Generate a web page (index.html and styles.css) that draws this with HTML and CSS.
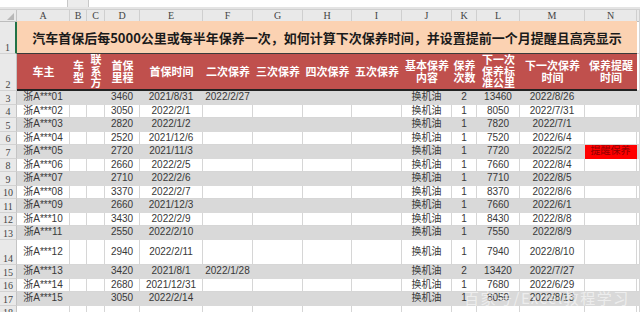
FILE: index.html
```html
<!DOCTYPE html>
<html lang="zh-CN">
<head>
<meta charset="utf-8">
<title>汽车保养提醒</title>
<link rel="stylesheet" href="styles.css">
</head>
<body>
<div class="sheet">
  <div class="topbar"><div class="namebox"></div><div class="fxgap"></div><div class="formula"></div></div>

  <div class="row colhdr">
    <div class="corner"><span class="tri"></span></div>
    <div class="ch">A</div><div class="ch">B</div><div class="ch">C</div><div class="ch">D</div><div class="ch">E</div><div class="ch">F</div><div class="ch">G</div><div class="ch">H</div><div class="ch">I</div><div class="ch">J</div><div class="ch">K</div><div class="ch">L</div><div class="ch">M</div><div class="ch">N</div><div class="ch"></div>
  </div>

  <div class="row r1">
    <div class="rh sel">1</div>
    <div class="title">汽车首保后每5000公里或每半年保养一次，如何计算下次保养时间，并设置提前一个月提醒且高亮显示</div>
    <div class="c"></div>
  </div>

  <div class="row r2">
    <div class="rh">2</div>
    <div class="h">车主</div>
    <div class="h">车<br>型</div>
    <div class="h">联<br>系<br>方</div>
    <div class="h">首保<br>里程</div>
    <div class="h">首保时间</div>
    <div class="h">二次保养</div>
    <div class="h">三次保养</div>
    <div class="h">四次保养</div>
    <div class="h">五次保养</div>
    <div class="h">基本保养<br>内容</div>
    <div class="h">保养<br>次数</div>
    <div class="h">下一次<br>保养标<br>准公里</div>
    <div class="h">下一次保养<br>时间</div>
    <div class="h">保养提醒<br>时间</div>
    <div class="c"></div>
  </div>

  <div class="row g"><div class="rh">3</div><div class="c">浙A***01</div><div class="c"></div><div class="c"></div><div class="c">3460</div><div class="c">2021/8/31</div><div class="c">2022/2/27</div><div class="c"></div><div class="c"></div><div class="c"></div><div class="c">换机油</div><div class="c">2</div><div class="c">13460</div><div class="c">2022/8/26</div><div class="c"></div><div class="c"></div></div>
  <div class="row w"><div class="rh">4</div><div class="c">浙A***02</div><div class="c"></div><div class="c"></div><div class="c">3050</div><div class="c">2022/2/1</div><div class="c"></div><div class="c"></div><div class="c"></div><div class="c"></div><div class="c">换机油</div><div class="c">1</div><div class="c">8050</div><div class="c">2022/7/31</div><div class="c"></div><div class="c"></div></div>
  <div class="row g"><div class="rh">5</div><div class="c">浙A***03</div><div class="c"></div><div class="c"></div><div class="c">2820</div><div class="c">2022/1/2</div><div class="c"></div><div class="c"></div><div class="c"></div><div class="c"></div><div class="c">换机油</div><div class="c">1</div><div class="c">7820</div><div class="c">2022/7/1</div><div class="c"></div><div class="c"></div></div>
  <div class="row w"><div class="rh">6</div><div class="c">浙A***04</div><div class="c"></div><div class="c"></div><div class="c">2520</div><div class="c">2021/12/6</div><div class="c"></div><div class="c"></div><div class="c"></div><div class="c"></div><div class="c">换机油</div><div class="c">1</div><div class="c">7520</div><div class="c">2022/6/4</div><div class="c"></div><div class="c"></div></div>
  <div class="row g"><div class="rh">7</div><div class="c">浙A***05</div><div class="c"></div><div class="c"></div><div class="c">2720</div><div class="c">2021/11/3</div><div class="c"></div><div class="c"></div><div class="c"></div><div class="c"></div><div class="c">换机油</div><div class="c">1</div><div class="c">7720</div><div class="c">2022/5/2</div><div class="c alert">提醒保养</div><div class="c"></div></div>
  <div class="row w"><div class="rh">8</div><div class="c">浙A***06</div><div class="c"></div><div class="c"></div><div class="c">2660</div><div class="c">2022/2/5</div><div class="c"></div><div class="c"></div><div class="c"></div><div class="c"></div><div class="c">换机油</div><div class="c">1</div><div class="c">7660</div><div class="c">2022/8/4</div><div class="c"></div><div class="c"></div></div>
  <div class="row g"><div class="rh">9</div><div class="c">浙A***07</div><div class="c"></div><div class="c"></div><div class="c">2710</div><div class="c">2022/2/6</div><div class="c"></div><div class="c"></div><div class="c"></div><div class="c"></div><div class="c">换机油</div><div class="c">1</div><div class="c">7710</div><div class="c">2022/8/5</div><div class="c"></div><div class="c"></div></div>
  <div class="row w"><div class="rh">10</div><div class="c">浙A***08</div><div class="c"></div><div class="c"></div><div class="c">3370</div><div class="c">2022/2/7</div><div class="c"></div><div class="c"></div><div class="c"></div><div class="c"></div><div class="c">换机油</div><div class="c">1</div><div class="c">8370</div><div class="c">2022/8/6</div><div class="c"></div><div class="c"></div></div>
  <div class="row g"><div class="rh">11</div><div class="c">浙A***09</div><div class="c"></div><div class="c"></div><div class="c">2660</div><div class="c">2021/12/3</div><div class="c"></div><div class="c"></div><div class="c"></div><div class="c"></div><div class="c">换机油</div><div class="c">1</div><div class="c">7660</div><div class="c">2022/6/1</div><div class="c"></div><div class="c"></div></div>
  <div class="row w"><div class="rh">12</div><div class="c">浙A***10</div><div class="c"></div><div class="c"></div><div class="c">3430</div><div class="c">2022/2/9</div><div class="c"></div><div class="c"></div><div class="c"></div><div class="c"></div><div class="c">换机油</div><div class="c">1</div><div class="c">8430</div><div class="c">2022/8/8</div><div class="c"></div><div class="c"></div></div>
  <div class="row g"><div class="rh">13</div><div class="c">浙A***11</div><div class="c"></div><div class="c"></div><div class="c">2550</div><div class="c">2022/2/10</div><div class="c"></div><div class="c"></div><div class="c"></div><div class="c"></div><div class="c">换机油</div><div class="c">1</div><div class="c">7550</div><div class="c">2022/8/9</div><div class="c"></div><div class="c"></div></div>
  <div class="row w tall"><div class="rh">14</div><div class="c">浙A***12</div><div class="c"></div><div class="c"></div><div class="c">2940</div><div class="c">2022/2/11</div><div class="c"></div><div class="c"></div><div class="c"></div><div class="c"></div><div class="c">换机油</div><div class="c">1</div><div class="c">7940</div><div class="c">2022/8/10</div><div class="c"></div><div class="c"></div></div>
  <div class="row g"><div class="rh">15</div><div class="c">浙A***13</div><div class="c"></div><div class="c"></div><div class="c">3420</div><div class="c">2021/8/1</div><div class="c">2022/1/28</div><div class="c"></div><div class="c"></div><div class="c"></div><div class="c">换机油</div><div class="c">2</div><div class="c">13420</div><div class="c">2022/7/27</div><div class="c"></div><div class="c"></div></div>
  <div class="row w"><div class="rh">16</div><div class="c">浙A***14</div><div class="c"></div><div class="c"></div><div class="c">2680</div><div class="c">2021/12/31</div><div class="c"></div><div class="c"></div><div class="c"></div><div class="c"></div><div class="c">换机油</div><div class="c">1</div><div class="c">7680</div><div class="c">2022/6/29</div><div class="c"></div><div class="c"></div></div>
  <div class="row g"><div class="rh">17</div><div class="c">浙A***15</div><div class="c"></div><div class="c"></div><div class="c">3050</div><div class="c">2022/2/14</div><div class="c"></div><div class="c"></div><div class="c"></div><div class="c"></div><div class="c">换机油</div><div class="c">1</div><div class="c">8050</div><div class="c">2022/8/13</div><div class="c"></div><div class="c"></div></div>
  <div class="row w"><div class="rh">18</div><div class="c"></div><div class="c"></div><div class="c"></div><div class="c"></div><div class="c"></div><div class="c"></div><div class="c"></div><div class="c"></div><div class="c"></div><div class="c"></div><div class="c"></div><div class="c"></div><div class="c"></div><div class="c"></div><div class="c"></div></div>

  <div class="watermark">百家号/Excel教程学习</div>
</div>
</body>
</html>
```

FILE: styles.css
```css
* { box-sizing: border-box; }

html, body {
  margin: 0;
  padding: 0;
  background: #ffffff;
}

body {
  width: 640px;
  height: 312px;
  overflow: hidden;
}

.sheet {
  position: relative;
  width: 640px;
  height: 312px;
  overflow: hidden;
  font-family: "Liberation Sans", "Noto Sans CJK SC", sans-serif;
  font-size: 10px;
  color: #383838;
}

/* formula bar remnant */
.topbar {
  display: flex;
  height: 10px;
  background: #e4e4e4;
  border-bottom: 1px solid #d0d0d0;
  padding-bottom: 2px;
}
.namebox {
  width: 68px;
  background: #ffffff;
  border-right: 1px solid #c8c8c8;
}
.fxgap {
  width: 20px;
  background: #ececec;
}
.formula {
  flex: 1;
  background: #ffffff;
  border-left: 1px solid #c8c8c8;
}

.row {
  display: grid;
  grid-template-columns: 17px 53px 17px 18px 35px 63px 50px 50px 49px 50px 50px 25px 43px 65px 52px 1fr;
  height: 13.5px;
}

/* column letters */
.colhdr {
  height: 11px;
  background: #e9e9e9;
}
.corner {
  position: relative;
  background: #e9e9e9;
  border-right: 1px solid #c4c4c4;
  border-bottom: 1px solid #bdbdbd;
}
.tri {
  position: absolute;
  right: 2px;
  bottom: 1px;
  width: 0;
  height: 0;
  border-left: 7px solid transparent;
  border-bottom: 7px solid #b8b8b8;
}
.ch {
  display: flex;
  align-items: center;
  justify-content: center;
  font-family: "Liberation Serif", serif;
  font-size: 10px;
  color: #444444;
  border-right: 1px solid #cfcfcf;
  border-bottom: 1px solid #bdbdbd;
}

/* row numbers */
.rh {
  display: flex;
  align-items: flex-end;
  justify-content: center;
  background: #e9e9e9;
  border-right: 1px solid #c4c4c4;
  border-bottom: 1px solid #d2d2d2;
  font-family: "Liberation Serif", serif;
  font-size: 10px;
  line-height: 11px;
  color: #444444;
}
.rh.sel {
  border-right: 2px solid #217346;
}

/* title row */
.r1 {
  height: 33px;
}
.title {
  grid-column: 2 / 16;
  display: flex;
  align-items: center;
  justify-content: center;
  background: #fbd2b2;
  border-bottom: 1px solid #3a3a3a;
  font-family: "Noto Sans CJK SC", sans-serif;
  font-weight: 700;
  font-size: 13px;
  color: #1a1a1a;
  white-space: nowrap;
}

/* header row */
.r2 {
  height: 37px;
}
.h {
  display: flex;
  align-items: center;
  justify-content: center;
  text-align: center;
  background: #c0504d;
  border-bottom: 2px solid #222222;
  font-family: "Noto Sans CJK SC", sans-serif;
  font-weight: 700;
  font-size: 11px;
  line-height: 11.7px;
  color: #ffffff;
  white-space: nowrap;
  overflow: hidden;
}

/* data cells */
.c {
  display: flex;
  align-items: center;
  justify-content: center;
  white-space: nowrap;
  border-right: 1px solid #d6d6d6;
  border-bottom: 1px solid #d6d6d6;
  line-height: 12px;
}
.g .c {
  background: #d9d9d9;
  border-color: #d9d9d9;
}
.w .c {
  background: #ffffff;
}
.tall {
  height: 25.5px;
}
.c.alert {
  background: #ff0000;
  border-color: #ff0000;
  color: #8e0000;
}

.watermark {
  position: absolute;
  left: 464px;
  top: 287px;
  font-family: "Noto Sans CJK SC", sans-serif;
  font-size: 15px;
  letter-spacing: 1.5px;
  color: rgba(255, 255, 255, 0.55);
  white-space: nowrap;
}
```
